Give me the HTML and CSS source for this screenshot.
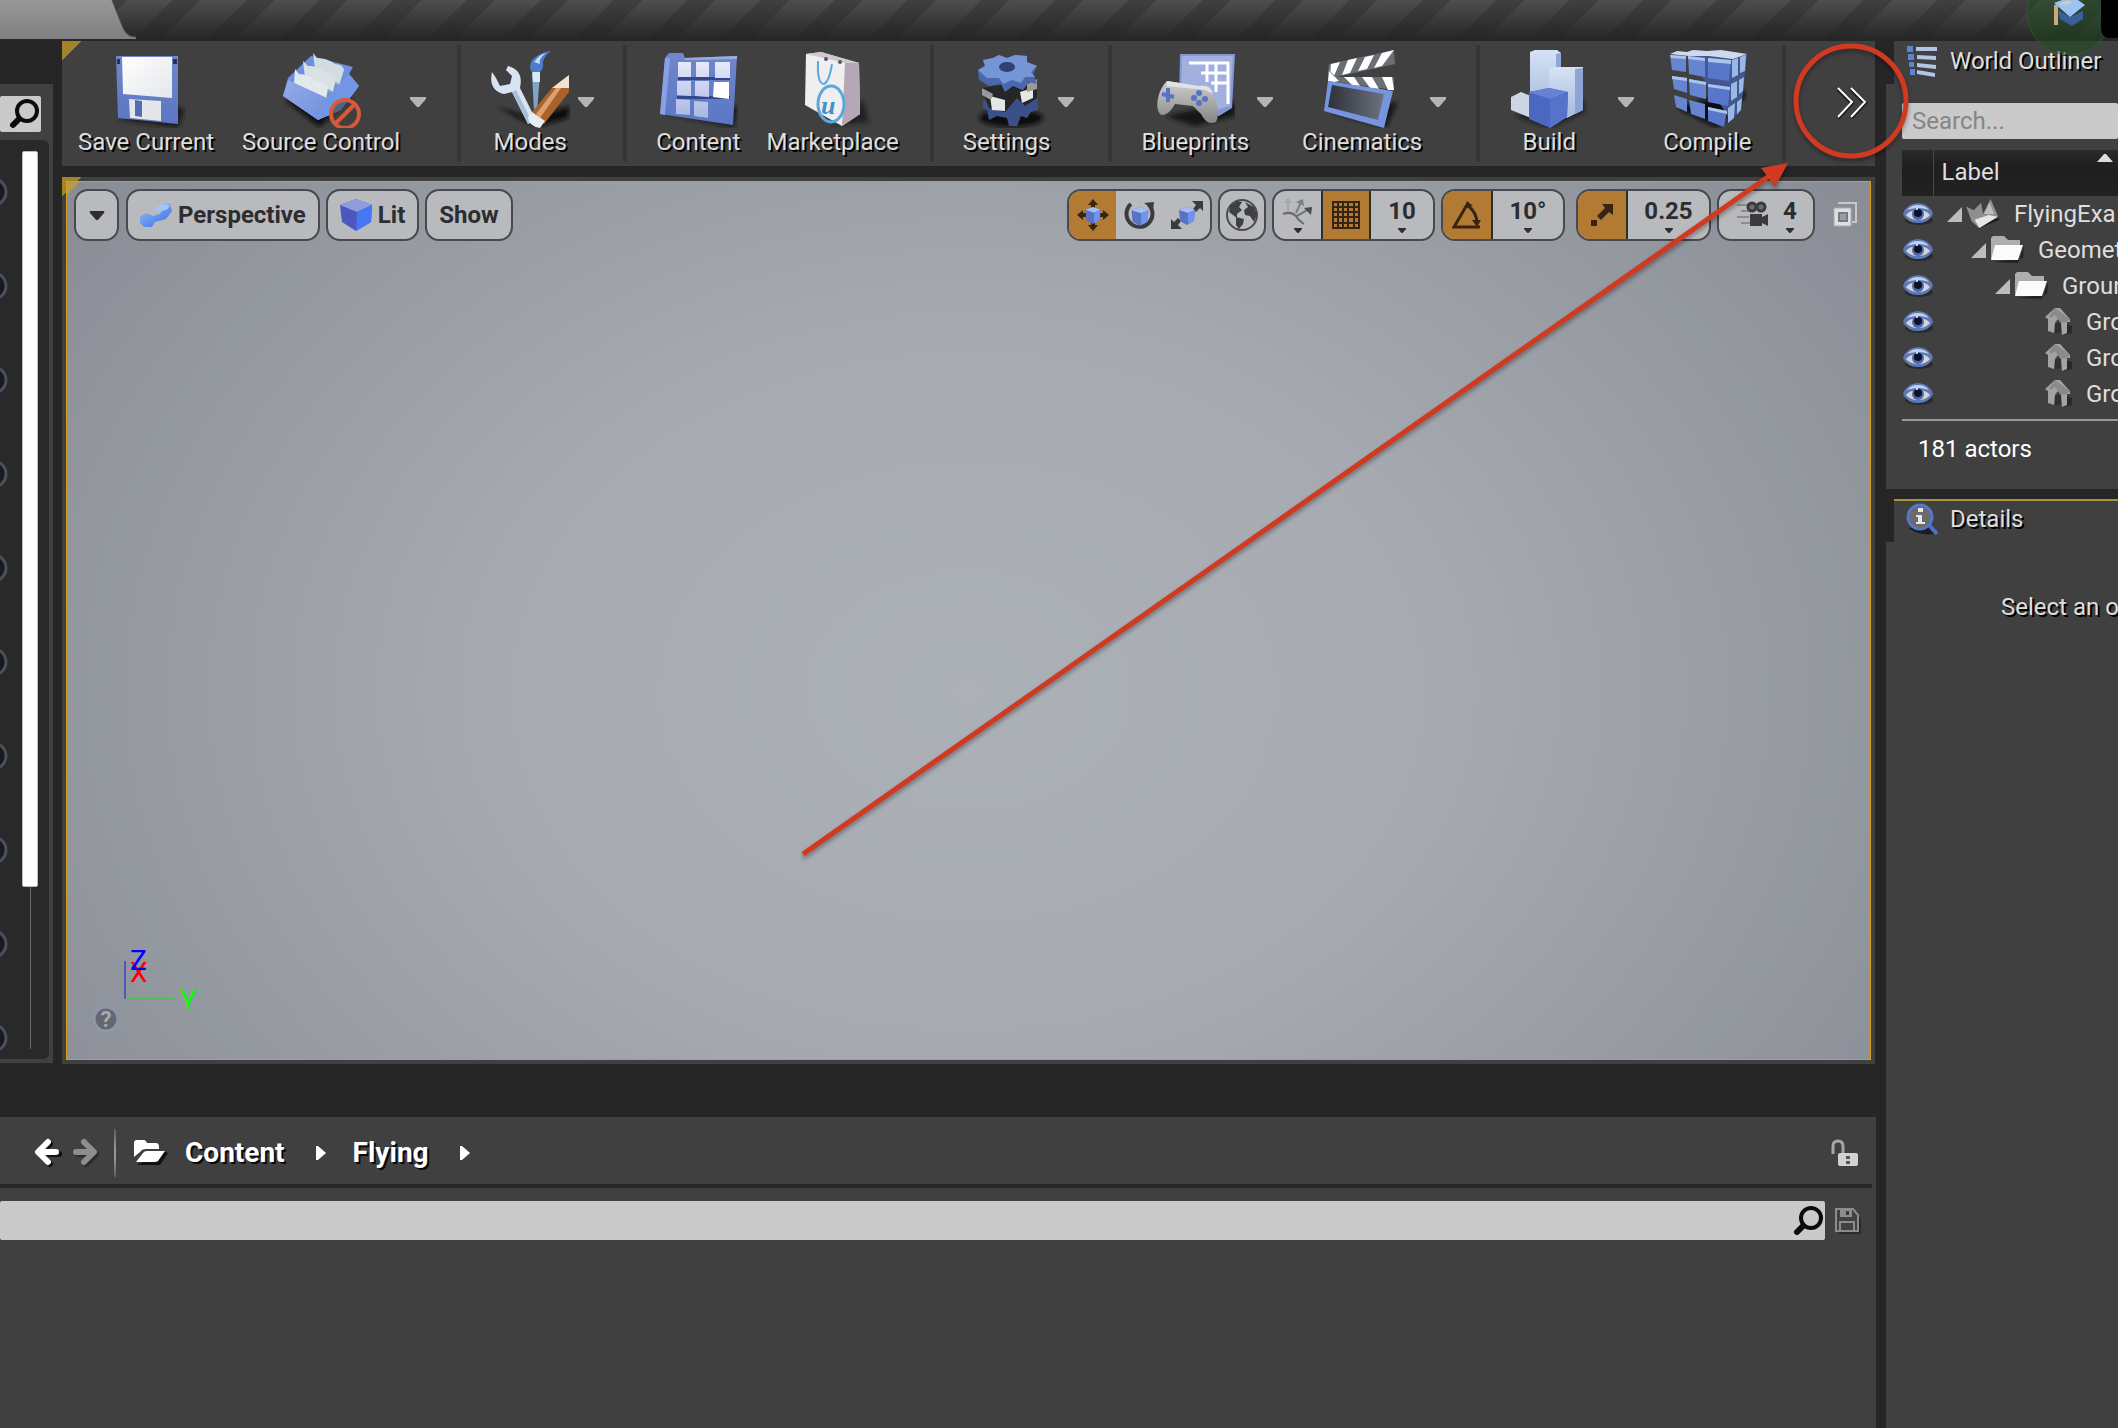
FILE: index.html
```html
<!DOCTYPE html>
<html lang="en">
<head>
<meta charset="utf-8">
<title>FlyingExample - Unreal Editor</title>
<link rel="stylesheet" href="styles.css">
</head>
<body>
<svg class="defs" width="0" height="0" aria-hidden="true">
  <defs>
    <linearGradient id="blue" x1="0" y1="0" x2="0" y2="1"><stop offset="0" stop-color="#6f87cb"/><stop offset="1" stop-color="#5b76c4"/></linearGradient>
    <linearGradient id="sky" x1="0" y1="0" x2="1" y2="1"><stop offset="0" stop-color="#94abe8"/><stop offset="1" stop-color="#6f8fdc"/></linearGradient>
    <linearGradient id="white" x1="0" y1="0" x2="1" y2="1"><stop offset="0" stop-color="#ffffff"/><stop offset="1" stop-color="#e4e6ea"/></linearGradient>
    <linearGradient id="tile" x1="0" y1="0" x2="0" y2="1"><stop offset="0" stop-color="#e6eafa"/><stop offset="1" stop-color="#a9b6e2"/></linearGradient>
    <linearGradient id="pale" x1="0" y1="0" x2="0" y2="1"><stop offset="0" stop-color="#d6e2f5"/><stop offset="1" stop-color="#a5b9dd"/></linearGradient>
    <linearGradient id="grey" x1="0" y1="0" x2="0" y2="1"><stop offset="0" stop-color="#cfcfcf"/><stop offset="1" stop-color="#858585"/></linearGradient>
    <linearGradient id="slate" x1="0" y1="0" x2="1" y2="0"><stop offset="0" stop-color="#2e3138"/><stop offset="1" stop-color="#6c727e"/></linearGradient>
    <linearGradient id="cyan" x1="0" y1="0" x2="1" y2="1"><stop offset="0" stop-color="#8fbcf5"/><stop offset="1" stop-color="#3b6ee6"/></linearGradient>
    <filter id="soft" x="-20%" y="-50%" width="140%" height="200%"><feGaussianBlur stdDeviation="2"/></filter>
    <symbol id="magnifier" viewBox="0 0 32 32"><circle cx="19" cy="13" r="10" fill="none" stroke="#0b0b0b" stroke-width="4"/><path d="M11 21 5 27" stroke="#0b0b0b" stroke-width="6" stroke-linecap="round"/></symbol>
    <symbol id="eye" viewBox="0 0 32 26"><ellipse cx="17" cy="19" rx="14" ry="5" fill="#2a2a2a"/><path d="M1 13Q4 3 16 2Q28 3 31 13Q27 22 16 22Q5 22 1 13z" fill="#5f7abb"/><path d="M5 9Q9 4 16 4Q23 4 27 9Q16 5 5 9z" fill="#c4cee8"/><path d="M4 14Q8 9 16 9Q24 9 28 14Q24 19 16 19Q8 19 4 14z" fill="#d6d3d0"/><circle cx="16" cy="13" r="6" fill="#4a66b4"/><circle cx="16" cy="12" r="4" fill="#0c1224"/><circle cx="15" cy="8" r="1" fill="#fff"/></symbol>
    <symbol id="folder" viewBox="0 0 34 28"><path d="M3 26 28 27 34 10 33 22z" fill="#222"/><path d="M1 24V2L3 0H14L18 4H30V9H7z" fill="#aeaeae"/><path d="M5 9H33L28 24H1z" fill="#fbfbfb"/></symbol>
    <symbol id="house" viewBox="0 0 28 30"><path d="M18 28 27 26 27 19 20 17z" fill="#282828"/><path d="M0 10 10 1 15 1 25 12 25 15 22 15 22 26 17 28 16 16 13 12 10 16 9 26 3 24 3 12z" fill="#a3a3a3"/><path d="M10 1 4 9 6 11 10 8 16 16 22 15 25 12z" fill="#8a8a8a"/><path d="M10 16 16 16 16 25 10 26z" fill="#303030"/></symbol>
    <symbol id="help" viewBox="0 0 30 30"><circle cx="15" cy="15" r="13" fill="#191a1d" stroke="#4a515e" stroke-width="3"/></symbol>
    <symbol id="drop" viewBox="0 0 16 10"><path d="M0 0H16V2L9 10H7L0 2z"/></symbol>
    <symbol id="twist" viewBox="0 0 15 15"><path d="M15 0V15H0z" fill="#bcbcbc"/></symbol>
    <symbol id="box" viewBox="0 0 16 18"><path d="M0 3 8 0 16 3 15 14 8 18 1 14z" fill="#5673c4"/><path d="M0 3 8 0 16 3 9 6z" fill="#a9bdf0"/><path d="M9 6 16 3 15 14 9 17z" fill="#6f93ee"/></symbol>
  </defs>
</svg>

<header class="titlebar">
  <svg class="tab-shape" width="140" height="39" viewBox="0 0 140 39" aria-hidden="true">
    <defs><linearGradient id="tabfill" x1="0" y1="0" x2="0" y2="1"><stop offset="0" stop-color="#989898"/><stop offset="1" stop-color="#7f7f7f"/></linearGradient></defs>
    <path d="M0 0H112L123 28Q127 37 136 37V39H0z" fill="url(#tabfill)"/>
    <path d="M112 0 123 28Q127 37 136 37" fill="none" stroke="#4a4a4a" stroke-width="1"/>
  </svg>
  <svg class="tutorial" width="92" height="56" viewBox="0 0 92 56" aria-hidden="true">
    <circle cx="43" cy="13" r="42" fill="#1f4a1f" fill-opacity=".5" stroke="#2a6a2a" stroke-opacity=".6"/>
    <path d="M32 10 44 17 57 11 57 19 46 26 34 19z" fill="#3d5f98"/><path d="M28 3 36 0H52L59 5 44 17z" fill="#9cc4f2"/><path d="M35 4 45 2" stroke="#e3cf9a" stroke-width="2"/><path d="M30 5V25" stroke="#c8ab7c" stroke-width="4"/>
    <path d="M75 0H92V38H82Q75 36 75 28z" fill="#000"/>
  </svg>
</header>

<div class="workspace">
  <div class="main">
    <div class="upper">
      <aside class="place-panel">
        <div class="field place-search"><input type="text" aria-label="Search classes"><svg width="32" height="32"><use href="#magnifier"/></svg></div>
        <div class="place-list">
          <ul class="helps">
            <li><svg><use href="#help"/></svg></li><li><svg><use href="#help"/></svg></li><li><svg><use href="#help"/></svg></li><li><svg><use href="#help"/></svg></li><li><svg><use href="#help"/></svg></li>
            <li><svg><use href="#help"/></svg></li><li><svg><use href="#help"/></svg></li><li><svg><use href="#help"/></svg></li><li><svg><use href="#help"/></svg></li><li><svg><use href="#help"/></svg></li>
          </ul>
          <div class="track"><div class="thumb"></div></div>
        </div>
      </aside>

      <div class="level">
        <nav class="toolbar corner" aria-label="Level toolbar">
          <div class="group first">
            <button class="tool"><svg viewBox="0 0 80 78">
              <path d="M12 70 72 78 79 60 70 56z" fill="#1c1c1c" filter="url(#soft)"/>
              <path d="M10 6H72V74L12 68z" fill="url(#blue)"/><path d="M16 7H66V48L17 44z" fill="url(#white)"/><path d="M23 49 55 51V71L24 68z" fill="#e4e6ea"/><path d="M29 50 36 51V67L29 66z" fill="#4f6cb4"/><path d="M11 9H14V14H11zM67 9H71V14H67z" fill="#26304f"/>
            </svg><span>Save Current</span></button>
            <button class="tool has-drop"><svg viewBox="0 0 80 78">
              <path d="M4 50 38 77 72 48z" fill="#111" filter="url(#soft)"/>
              <path d="M7 28 30 6 72 17 68 24 78 36 60 60 37 70 2 46z" fill="#6e8fe0"/>
              <path d="M32 3 36 8Q46 8 54 14Q62 14 63 20L58 36 34 20z" fill="#d3dce1"/><path d="M34 22 58 35" stroke="#93a4b4" stroke-width="2"/>
              <path d="M22 11 27 16Q36 15 45 22Q54 23 55 29L52 42 24 28z" fill="#d9e1e5"/><path d="M25 29 50 42" stroke="#8e9fb0" stroke-width="2"/>
              <path d="M14 19 18 24Q28 24 35 31Q45 32 47 38L45 50 13 34z" fill="#e1e9ec"/>
              <path d="M7 30 46 48 37 70 2 46z" fill="url(#sky)"/><path d="M46 48 68 24 78 36 60 60 37 70z" fill="#7396e4"/>
              <circle cx="64" cy="64" r="14" fill="#404040" fill-opacity=".6" stroke="#d55a3c" stroke-width="4"/><path d="M54 74 74 54" stroke="#d55a3c" stroke-width="4"/>
            </svg><span>Source Control</span></button>
            <button class="drop" aria-label="Source Control options"><svg><use href="#drop"/></svg></button>
          </div>
          <div class="group modes">
            <button class="tool has-drop"><svg viewBox="0 0 80 78">
              <path d="M6 56 40 68 80 56 78 68 50 76 36 72z" fill="#0d0d0d" filter="url(#soft)"/>
              <path d="M2 22Q-2 40 14 44L22 42 38 74 46 70 30 38Q34 20 18 16L16 20 22 26 20 34 10 36 6 28z" fill="#d9e4f2"/><path d="M22 42 38 74 42 72 26 40z" fill="#a8bedb"/>
              <path d="M42 24H50L47 62H44z" fill="#7fa3c9"/><path d="M42 20H50V32H43z" fill="#dce8f4"/><path d="M61 1Q50 2 42 10Q38 18 42 22L50 22Q54 18 53 12Q54 6 61 1z" fill="#4f7cc9"/><path d="M44 12Q50 4 56 3Q48 9 50 14z" fill="#c3dcf7"/>
              <path d="M79 25V42L54 74 42 62 62 38z" fill="#a8632a"/><path d="M79 25V38L70 38 62 38z" fill="#f1e3d3"/><path d="M66 38 46 64 50 68 71 38z" fill="#dfa070"/><path d="M42 62 55 71 50 78Q38 76 38 67z" fill="#e5edf5"/>
            </svg><span>Modes</span></button>
            <button class="drop" aria-label="Mode options"><svg><use href="#drop"/></svg></button>
          </div>
          <div class="group">
            <button class="tool"><svg viewBox="0 0 80 78">
              <path d="M8 64 76 78 80 56z" fill="#1a1a1a" filter="url(#soft)"/>
              <path d="M7 8 11 3H25L27 8 79 6 75 75 2 64z" fill="url(#blue)"/><path d="M27 8 79 6V9L27 10z" fill="#9badde"/><path d="M7 8 12 8 7 65 2 64z" fill="#88a0e6"/>
              <path d="M20 27H72V30H20zM19 46H72V49H19z" fill="#33488c"/>
              <path d="M20 12H33V27H20zM38 12H51V27H38zM57 12H72V28H57zM19 31H33V46L19 45zM37 31H51V47L37 46zM18 49 32 50V65L18 64zM36 51 50 52V68L36 66z" fill="url(#tile)"/><path d="M56 32H71V49L55 47z" fill="#fff"/>
            </svg><span>Content</span></button>
            <button class="tool"><svg viewBox="0 0 80 78">
              <path d="M40 76 76 72 70 50z" fill="#222" filter="url(#soft)"/>
              <path d="M13 4 28 2 66 13 67 64 49 76 12 55z" fill="#f1eef2"/><path d="M52 13 66 13 67 64 49 76z" fill="#b5a8b4"/><path d="M13 4 28 2 66 13 52 13z" fill="#cfc9cf"/>
              <path d="M25 11Q24 34 31 34Q36 32 39 14" fill="none" stroke="#5aa9dc" stroke-width="2"/><ellipse cx="38" cy="54" rx="13" ry="18" fill="none" stroke="#5aa9dc" stroke-width="3"/>
              <text x="28" y="64" class="bag-mark">u</text><circle cx="33" cy="9" r="2" fill="#555"/><circle cx="47" cy="12" r="2" fill="#555"/>
            </svg><span>Marketplace</span></button>
          </div>
          <div class="group">
            <button class="tool has-drop"><svg viewBox="0 0 80 78">
              <ellipse cx="44" cy="68" rx="32" ry="9" fill="#111" filter="url(#soft)"/>
              <path d="M16 50 66 44 71 46 71 60 64 62 60 68 54 66 50 76 42 76 40 68 30 66 22 70 20 60 16 58z" fill="#3b5088"/><path d="M14 38 70 30V48L58 56 50 48 38 62 22 58 18 48z" fill="#252628"/>
              <path d="M23 46 38 50V61L25 60zM53 42 66 38V48L55 53z" fill="#e6e6e6"/><path d="M15 38 26 44 24 50 15 45zM60 34 70 29V39L60 42z" fill="#9a9a9a"/>
              <path d="M11 20 18 16 16 10 26 8 32 5 40 8 48 5 60 6 60 12 70 16 66 24 70 34 62 32 56 40 46 36 38 42 34 34 22 36 12 30z" fill="#4a68ac"/>
              <path d="M11 20 18 16 16 10 26 8 32 5 40 8 48 5 60 6 60 12 70 16 64 22 68 27 58 27 54 33 45 30 36 34 32 28 20 28z" fill="#7595d6"/><ellipse cx="40" cy="17" rx="8" ry="5" fill="#2e4271"/>
            </svg><span>Settings</span></button>
            <button class="drop" aria-label="Settings options"><svg><use href="#drop"/></svg></button>
          </div>
          <div class="group pair">
            <button class="tool has-drop"><svg viewBox="0 0 80 78">
              <path d="M10 66 40 76 80 66 80 52z" fill="#151515" filter="url(#soft)"/>
              <path d="M25 4H80L77 58 64 66 24 50z" fill="#8398d3"/><path d="M27 6H78L75 56 60 60 26 48z" fill="#a1b0de"/>
              <path d="M34 13H73V54M52 13V32M61 13V42M46 23H73M56 33H73" fill="none" stroke="#fff" stroke-width="3"/>
              <path d="M12 31 44 36Q56 34 58 44Q66 62 61 72Q52 76 46 64L38 56 20 54Q12 68 5 64Q0 58 4 44Q7 36 12 31z" fill="url(#grey)"/><path d="M12 31 44 36Q56 34 58 44L50 40 12 36z" fill="#e2e2e2"/>
              <path d="M13 38V52M7 44 19 47" stroke="#5673c4" stroke-width="4"/><g fill="#5673c4"><circle cx="44" cy="43" r="3"/><circle cx="44" cy="53" r="3"/><circle cx="39" cy="48" r="3"/><circle cx="50" cy="49" r="3"/></g>
            </svg><span>Blueprints</span></button>
            <button class="drop" aria-label="Blueprint options"><svg><use href="#drop"/></svg></button>
            <button class="tool has-drop"><svg viewBox="0 0 80 78">
              <path d="M8 62 64 78 76 52z" fill="#151515" filter="url(#soft)"/>
              <path d="M7 14 72 0 73 14 14 27 10 31 6 23z" fill="#6a6f75"/><path d="M9 14 18 12 12 26 8 24zM26 10 35 8 28 23 20 25zM43 7 52 5 45 19 36 21zM60 3 72 0 60 16 52 18z" fill="#fff"/>
              <path d="M7 20 14 27 72 27V40L6 31z" fill="#6a6f75"/><path d="M7 21 17 31 12 32 6 31zM22 27 32 27 38 36 30 35zM40 27 50 27 57 39 48 38zM60 27H70L72 40 66 40z" fill="#fff"/>
              <path d="M6 31 71 41 62 78 2 61z" fill="#7595e0"/><path d="M10 35 62 44 56 70 6 57z" fill="url(#slate)"/>
            </svg><span>Cinematics</span></button>
            <button class="drop" aria-label="Cinematics options"><svg><use href="#drop"/></svg></button>
          </div>
          <div class="group">
            <button class="tool wide has-drop"><svg viewBox="0 0 80 78">
              <path d="M6 66 40 78 76 62 74 50z" fill="#1a1a1a" filter="url(#soft)"/>
              <path d="M21 2 26 0H48L52 3V60H21z" fill="url(#pale)"/><path d="M47 4 52 3V46H47z" fill="#8ea6d2"/><path d="M40 19 46 17H74V60L58 68 40 60z" fill="url(#pale)"/><path d="M66 19 74 18V60L66 64z" fill="#8da5d5"/><path d="M2 47 12 42 22 46V68L2 60z" fill="#cfd6e3"/>
              <path d="M20 42 40 38 59 42 58 67 41 78 20 69z" fill="#4a68c2"/><path d="M20 42 40 38 59 42 41 49z" fill="#6583d0"/><path d="M41 49 59 42 58 67 41 78z" fill="#5573cb"/>
            </svg><span>Build</span></button>
            <button class="drop" aria-label="Build options"><svg><use href="#drop"/></svg></button>
            <button class="tool"><svg viewBox="0 0 80 78">
              <path d="M10 58 50 78 80 44 74 40z" fill="#111" filter="url(#soft)"/>
              <path d="M18 3 26 0 80 4 78 22 76 44 72 64 62 68 44 40z" fill="#44588e"/><path d="M3 4 10 1 20 2 26 0 40 1 54 0 80 4 66 9 42 6 22 6z" fill="#cfdaf0"/>
              <path d="M65 10 71 8V25L65 28zM73 7 79 5 78 21 73 23zM64 34 70 31 70 47 64 51zM72 30 77 27 76 41 72 44zM61 58 68 53 67 68 61 73zM70 52 75 48 74 60 70 64z" fill="#98b9e8"/>
              <path d="M3 5 19 6V22L5 20zM21 6 38 8V27L22 24zM5 26 20 28V43L7 39zM22 29 39 32V49L23 45zM7 45 20 49V62L9 57zM22 50 38 54V69L24 64z" fill="#6684d0"/><path d="M41 8 64 10 62 31 41 28zM41 34 63 37 61 56 41 52zM41 57 60 61 57 77 41 71z" fill="#5777cb"/>
              <path d="M3 5 19 6V9L4 8zM21 6 38 8V11L21 9zM41 8 64 10V14L41 12zM5 26 20 28V31L5 29zM22 29 39 32V35L22 32zM41 34 63 37V40L41 37zM41 57 60 61V64L41 60z" fill="#a9c5ee"/>
            </svg><span>Compile</span></button>
          </div>
          <div class="group more">
            <button class="overflow" aria-label="More tools"><svg width="34" height="34" viewBox="0 0 34 34"><path d="M3 3 17 17 3 32M16 3 30 17 16 32" fill="none" stroke="#1c1c1c" stroke-width="4"/><path d="M3 2 17 16 3 31M16 2 30 16 16 31" fill="none" stroke="#fff" stroke-width="2"/></svg></button>
          </div>
        </nav>

        <section class="viewport-panel corner" aria-label="Viewport">
          <div class="viewport">
            <div class="view-tools">
              <button class="pill menu" aria-label="Viewport options"><svg width="16" height="9" class="ink"><use href="#drop"/></svg></button>
              <button class="pill"><svg width="32" height="32" viewBox="0 0 32 32"><path d="M0 18 6 14 13 17 20 15 22 11 16 9 22 5 30 5 32 12 26 20 15 23 12 28 4 28 0 24z" fill="url(#cyan)"/><path d="M13 10 22 5 30 6 28 10 20 13z" fill="#9fc6f5"/></svg>Perspective</button>
              <button class="pill"><svg width="32" height="32" viewBox="0 0 32 32"><path d="M0 6 16 0 32 6 31 23 16 32 2 23z" fill="#4c57bd"/><path d="M0 6 16 0 32 6 17 13z" fill="#8e9ddd"/><path d="M17 13 32 6 31 23 16 32z" fill="#4576f3"/></svg>Lit</button>
              <button class="pill">Show</button>
              <span class="spacer"></span>
              <div class="segment">
                <button class="cell on" aria-label="Translate"><svg width="32" height="32" viewBox="0 0 32 32"><path d="M16 0 21 6H18V26H21L16 32 11 26H14V6H11zM0 16 6 11V14H26V11L32 16 26 21V18H6V21z" fill="#352512"/><use href="#box" x="8" y="8" width="16" height="17"/></svg></button>
                <button class="cell" aria-label="Rotate"><svg width="32" height="32" viewBox="0 0 32 32"><path d="M7 5A13 13 0 1 0 25 6" fill="none" stroke="#3a3b3d" stroke-width="4"/><path d="M20 4 30 3 29 11z" fill="#3a3b3d"/><use href="#box" x="7" y="8" width="18" height="19"/></svg></button>
                <button class="cell" aria-label="Scale"><svg width="34" height="32" viewBox="0 0 34 32"><path d="M22 2H33V12L30 9 26 13 23 10 26 6zM1 20 4 23 8 19 11 22 8 26 12 30H1z" fill="#3a3b3d"/><use href="#box" x="8" y="8" width="18" height="18"/></svg></button>
              </div>
              <button class="pill cell" aria-label="World space"><svg width="34" height="34" viewBox="0 0 34 34"><circle cx="17" cy="17" r="15" fill="#b9babd" stroke="#4a4b4d" stroke-width="2"/><path d="M5 8 12 3 17 4 14 9 17 12 12 16 12 20 8 17 4 14zM11 19 19 21 18 26 14 31 11 27zM20 4 29 9 32 16 29 24 25 18 20 17 19 12 23 9z" fill="#3f4042"/></svg></button>
              <div class="segment">
                <button class="cell col" aria-label="Surface snapping"><svg width="32" height="28" viewBox="0 0 32 28"><path d="M1 17Q9 14 14 19Q16 23 22 27M15 19 27 12" fill="none" stroke="#6b6c6f" stroke-width="2"/><path d="M22 11 30 10 29 18z" fill="#4a4b4e"/><path d="M6 15V3" fill="none" stroke="#a5a6aa" stroke-width="2"/><path d="M2 6 6 1 10 6z" fill="#a5a6aa"/><path d="M14 16 19 5" fill="none" stroke="#7d7e82" stroke-width="2"/><path d="M14 5 21 2 22 9z" fill="#7d7e82"/></svg><svg width="8" height="5" class="ink"><use href="#drop"/></svg></button>
                <button class="cell grid on" aria-label="Grid snapping"><svg width="28" height="28" viewBox="0 0 28 28"><path d="M1 1H27V27H1zM6 1V27M11 1V27M16 1V27M22 1V27M1 6H27M1 11H27M1 16H27M1 22H27" fill="none" stroke="#352512" stroke-width="2"/></svg></button>
                <button class="cell col n1"><span>10</span><svg width="8" height="5" class="ink"><use href="#drop"/></svg></button>
              </div>
              <div class="segment angle">
                <button class="cell grid on" aria-label="Rotation snapping"><svg width="30" height="30" viewBox="0 0 30 30"><path d="M16 3 2 27H28M16 6Q25 12 25 24" fill="none" stroke="#352512" stroke-width="3"/><path d="M13 8 15 1 21 6zM20 20 29 20 25 27z" fill="#352512"/></svg></button>
                <button class="cell col n2"><span>10°</span><svg width="8" height="5" class="ink"><use href="#drop"/></svg></button>
              </div>
              <div class="segment">
                <button class="cell grid on" aria-label="Scale snapping"><svg width="26" height="26" viewBox="0 0 26 26"><path d="M2 18H8V24H2zM13 2H24V13L20 10 12 18 8 14 16 6z" fill="#352512"/></svg></button>
                <button class="cell col n3"><span>0.25</span><svg width="8" height="5" class="ink"><use href="#drop"/></svg></button>
              </div>
              <button class="pill camera"><svg width="34" height="28" viewBox="0 0 34 28"><path d="M2 4H14M6 10H16M2 16H14M6 22H16" stroke="#8b8c90" stroke-width="2"/><path d="M15 13H27V16L33 13V25L27 22V25H15z" fill="#3a3b3d"/><g fill="#6d6e71" stroke="#3a3b3d" stroke-width="3"><circle cx="17" cy="6" r="4"/><circle cx="26" cy="6" r="4"/></g></svg><span class="col"><span>4</span><svg width="8" height="5" class="ink"><use href="#drop"/></svg></span></button>
              <button class="maximize" aria-label="Restore viewport"><svg width="26" height="26" viewBox="0 0 26 26"><path d="M6 1H24V20H20" fill="none" stroke="#c7c8cb" stroke-width="2"/><path d="M2 6H19V24H2z" fill="#dedfe1" stroke="#a9abb0" stroke-width="1"/><path d="M7 11H15V19H7z" fill="#9a9da6" stroke="#777a83" stroke-width="2"/></svg></button>
            </div>
            <svg class="axis" width="120" height="100" viewBox="0 0 120 100" role="img" aria-label="Axis gizmo">
              <path d="M38 58V20" stroke="#1414e6" fill="none"/><path d="M38 58H89" stroke="#14e614" fill="none"/>
              <text x="43" y="41" fill="#f00">X</text><text x="43" y="29" fill="#00f">Z</text><text x="93" y="69" fill="#0f0">Y</text>
              <circle cx="19" cy="78" r="12" fill="#64676f" stroke="#8d97ab" stroke-width="3"/><text x="19" y="86" class="q">?</text>
            </svg>
          </div>
        </section>
      </div>
    </div>

    <section class="browser" aria-label="Content browser">
      <div class="crumbs">
        <button class="bare" aria-label="Back"><svg width="28" height="30" viewBox="0 0 28 30"><g fill="none" stroke-width="6" stroke-linecap="round" stroke-linejoin="round"><path d="M16 6 6 16 16 26M7 16H25" stroke="#111"/><path d="M14 4 4 14 14 24M5 14H22" stroke="#fff"/></g></svg></button>
        <button class="bare" aria-label="Forward"><svg width="28" height="30" viewBox="0 0 28 30"><g fill="none" stroke-width="6" stroke-linecap="round" stroke-linejoin="round"><path d="M14 6 24 16 14 26M6 16H22" stroke="#2b2b2b"/><path d="M12 4 22 14 12 24M4 14H20" stroke="#8e8e8e"/></g></svg></button>
        <span class="rule"></span>
        <button class="bare paths" aria-label="Choose a path"><svg width="34" height="28" viewBox="0 0 34 28"><path d="M3 26 26 26 34 14 30 12z" fill="#111"/><path d="M0 18V4Q0 1 3 1H10Q12 1 13 4H22Q25 4 25 8V10H12Q8 10 6 13z" fill="#fff"/><path d="M2 23 9 14Q10 12 13 12H31L24 22Q23 23 20 23z" fill="#fff"/></svg></button>
        <a href="#content">Content</a><svg class="arrow" width="12" height="18" viewBox="0 0 12 18"><path d="M1 2H3L11 9 3 16H1z"/></svg>
        <a href="#flying">Flying</a><svg class="arrow" width="12" height="18" viewBox="0 0 12 18"><path d="M1 2H3L11 9 3 16H1z"/></svg>
        <button class="bare lock" aria-label="Lock"><svg width="28" height="28" viewBox="0 0 28 28"><path d="M2 15V7Q2 2 7 2Q12 2 12 7V15" fill="none" stroke="#a6a6a6" stroke-width="3"/><rect x="7" y="14" width="20" height="13" rx="2" fill="#d2d2d2"/><path d="M15 17H19V20H15zM15 22H19V25H15z" fill="#555"/></svg></button>
      </div>
      <div class="filter">
        <div class="field wide-search"><input type="text" aria-label="Search Flying"><svg width="32" height="32"><use href="#magnifier"/></svg></div>
        <button class="bare" aria-label="Save search"><svg width="26" height="26" viewBox="0 0 26 26"><path d="M4 24H24V8L26 10V26H4z" fill="#2b2b2b"/><path d="M1 1H18L23 7V23H1z" fill="none" stroke="#8c8c8c" stroke-width="2"/><path d="M5 1H17V9H5z" fill="#8c8c8c"/><path d="M11 3H14V7H11z" fill="#3a3a3a"/><path d="M5 22V14H19V22" fill="none" stroke="#8c8c8c" stroke-width="2"/></svg></button>
      </div>
    </section>
  </div>

  <aside class="side">
    <section class="outliner">
      <h2 class="tab"><svg width="32" height="32" viewBox="0 0 32 32"><path d="M1 1H7V7H1zM2 9H8V15H2zM3 17H8V22H3zM4 24H9V30H4z" fill="#5b84d4"/><path d="M10 2H31V6H10zM11 10 30 11V15L11 14zM11 18 30 20V24L11 22zM11 25 29 28V32L11 29z" fill="#b4c4e6"/></svg>World Outliner</h2>
      <div class="outliner-body">
        <div class="field side-search"><input type="text" placeholder="Search..." aria-label="Search actors"></div>
        <div class="tree">
          <table>
            <thead><tr><th class="vis" aria-label="Visibility"></th><th>Label<svg class="sort" width="16" height="8" viewBox="0 0 16 8"><path d="M0 8 7 0H9L16 8z" fill="#ddd"/></svg></th></tr></thead>
            <tbody>
              <tr><td class="vis"><svg><use href="#eye"/></svg></td><td><div class="node d0"><svg class="twist"><use href="#twist"/></svg><svg class="kind" viewBox="0 0 36 32"><path d="M12 32 36 22 30 18z" fill="#1f1f1f"/><path d="M0 8 8 12 16 4 18 16 26 0 34 18 14 31 6 24z" fill="#8f8f8f"/><path d="M9 22 24 17 34 19 14 31z" fill="#e6e6e6"/><path d="M19 16 25 4 30 16z" fill="#bdbdbd"/></svg>FlyingExa</div></td></tr>
              <tr><td class="vis"><svg><use href="#eye"/></svg></td><td><div class="node d1"><svg class="twist"><use href="#twist"/></svg><svg class="kind"><use href="#folder"/></svg>Geomet</div></td></tr>
              <tr><td class="vis"><svg><use href="#eye"/></svg></td><td><div class="node d2"><svg class="twist"><use href="#twist"/></svg><svg class="kind"><use href="#folder"/></svg>Groun</div></td></tr>
              <tr><td class="vis"><svg><use href="#eye"/></svg></td><td><div class="node d3"><svg class="kind"><use href="#house"/></svg>Gro</div></td></tr>
              <tr><td class="vis"><svg><use href="#eye"/></svg></td><td><div class="node d3"><svg class="kind"><use href="#house"/></svg>Gro</div></td></tr>
              <tr><td class="vis"><svg><use href="#eye"/></svg></td><td><div class="node d3"><svg class="kind"><use href="#house"/></svg>Gro</div></td></tr>
            </tbody>
          </table>
        </div>
        <p class="count">181 actors</p>
      </div>
    </section>
    <section class="details">
      <h2 class="tab active"><svg width="32" height="34" viewBox="0 0 32 34"><path d="M2 26Q14 34 28 32L22 24z" fill="#1d1d1d"/><path d="M22 22 31 32" stroke="#4c70c4" stroke-width="4"/><circle cx="14" cy="15" r="12" fill="#6a6a6a" stroke="#5476c6" stroke-width="3"/><path d="M12 6H17V10H12zM10 13H16V20H19V22H10V20H12V15H10z" fill="#e6e6e6"/></svg>Details</h2>
      <div class="details-body"><p>Select an o</p></div>
    </section>
  </aside>
</div>

<svg class="callout" width="1120" height="820" viewBox="0 0 1120 820" aria-hidden="true">
  <g transform="translate(-800 -40)">
    <circle cx="1851" cy="101" r="55" fill="none" stroke="#d13a20" stroke-width="5"/>
    <path d="M803 854 1772 174" stroke="#d13a20" stroke-width="5" fill="none"/>
    <path d="M1788 163 1761 168 1775 187z" fill="#d13a20"/>
  </g>
</svg>
</body>
</html>
```

FILE: styles.css
```css
:root {
  --gap: #262626;
  --panel: #404040;
  --gold: #d99c18;
  --ink: #2c2d2f;
  --field: #cacaca;
}

* { box-sizing: border-box; }

body {
  position: relative;
  margin: 0;
  min-height: 100vh;
  display: flex;
  flex-direction: column;
  overflow: hidden;
  background: var(--gap);
  color: #dedede;
  font: 24px/28px Roboto, "Liberation Sans", sans-serif;
}

svg { display: block; flex: none; }
.defs { position: absolute; }

button {
  display: flex;
  align-items: center;
  justify-content: center;
  margin: 0;
  padding: 0;
  border: 0;
  background: none;
  color: inherit;
  font: inherit;
}

h2, p, ul { margin: 0; padding: 0; }
ul { list-style: none; }

/* Title bar */
.titlebar {
  display: flex;
  justify-content: space-between;
  height: 39px;
  margin-bottom: 2px;
  background:
    linear-gradient(rgba(34, 34, 34, 0), rgba(34, 34, 34, .9)),
    repeating-linear-gradient(135deg, #4e4e4e 0 18px, #404040 18px 38px, #4e4e4e 38px 52px);
}
.tutorial { position: relative; z-index: 2; }

/* Work area */
.workspace { flex: 1; display: flex; gap: 10px; }
.main { flex: 1; min-width: 0; display: flex; flex-direction: column; gap: 53px; }
.upper { flex: 1; display: flex; gap: 9px; margin-right: 1px; }
.level { flex: 1; min-width: 0; display: flex; flex-direction: column; gap: 11px; }

.field { display: flex; align-items: center; background: var(--field); border-radius: 2px; }
.field input {
  flex: 1;
  min-width: 0;
  width: 0;
  height: 100%;
  padding: 0 10px;
  border: 0;
  background: none;
  font: inherit;
  color: #222;
}
.field input::placeholder { color: #858585; opacity: 1; }

/* Left strip */
.place-panel {
  width: 53px;
  margin: 43px 0 1px;
  padding: 12px 4px 4px 0;
  background: var(--panel);
  display: flex;
  flex-direction: column;
  gap: 8px;
}
.place-search { height: 36px; margin-right: 8px; padding-right: 1px; }
.place-search input { padding: 0; }
.place-list {
  flex: 1;
  display: flex;
  justify-content: space-between;
  padding: 11px 11px 10px 0;
  background: #292929;
  border-radius: 0 6px 6px 0;
}
.helps { width: 8px; overflow: hidden; padding-top: 26px; margin-bottom: -8px; display: flex; flex-direction: column; gap: 64px; }
.helps li { height: 30px; display: flex; justify-content: flex-end; }
.helps svg { width: 30px; height: 30px; }
.track { width: 16px; background: linear-gradient(#6a6a6a, #6a6a6a) 8px 0 / 1px 100% no-repeat; }
.thumb { height: 82%; background: #fff; border: 1px solid #bbb; border-radius: 2px; }

/* Main toolbar */
.corner {
  background: linear-gradient(135deg, #a08427 14px, transparent 14px), var(--panel);
}
.toolbar { display: flex; height: 125px; padding: 4px 0; }
.group { display: flex; padding: 5px 18px 0 16px; border-left: 4px solid #353535; }
.group.first { gap: 2px; padding-left: 3px; padding-right: 15px; border-left: 0; }
.group.modes { padding-right: 13px; }
.group.pair { padding-right: 14px; }
.tool { flex-direction: column; justify-content: flex-start; padding: 0 13px; white-space: nowrap; text-shadow: 2px 2px 0 #000; }
.tool svg { width: 80px; height: 78px; }
.tool.has-drop { padding-right: 2px; }
.tool.wide { margin-right: 21px; }
.drop { width: 38px; height: 104px; justify-content: flex-start; padding-left: 6px; }
.drop svg { width: 16px; height: 10px; fill: #b4b4b4; }
.more { flex: 1; justify-content: flex-end; padding-right: 6px; padding-left: 0; }
.overflow { height: 106px; }
.bag-mark { font: italic bold 26px/26px "Liberation Serif", serif; fill: #3d93cc; text-shadow: none; }

/* Viewport */
.viewport-panel { flex: 1; display: flex; padding: 4px; }
.viewport {
  flex: 1;
  display: flex;
  flex-direction: column;
  justify-content: space-between;
  padding: 7px 12px 18px 7px;
  border: 1px solid var(--gold);
  background:
    linear-gradient(135deg, rgba(200, 160, 50, .7) 9px, transparent 9px),
    radial-gradient(ellipse 62% 95% at 50% 58%, #acb0b7 0%, #a7aab1 42%, #94989f 78%, #838690 112%);
}
.view-tools { display: flex; align-items: center; gap: 6px; color: var(--ink); font-weight: 700; }
.spacer { flex: 1; }
.ink { fill: var(--ink); }
.pill, .segment {
  height: 52px;
  border: 2px solid #47494d;
  border-radius: 14px;
  background: #b9babe;
}
.pill { gap: 6px; padding: 0 12px; }
.pill.menu { width: 45px; padding: 0; margin-right: 1px; }
.pill.cell { padding: 0; }
.segment { display: flex; overflow: hidden; }
.cell { width: 48px; }
.segment .cell { height: 100%; width: 47px; }
.col { display: flex; flex-direction: column; justify-content: center; align-items: center; line-height: 28px; }
.col .ink { margin-top: 3px; }
.cell.on { background: #b27a33; }
.segment .grid { width: 50px; border-right: 2px solid var(--ink); }
.segment .grid:not(:first-child) { border-left: 2px solid var(--ink); }
.segment .n1 { width: 62px; }
.segment .n2 { width: 70px; }
.segment .n3 { width: 81px; }
.angle { margin-right: 5px; }
.camera { width: 98px; gap: 14px; }
.maximize { margin-left: 11px; }
.axis { margin-left: 13px; font-size: 28px; }
.axis .q { font-size: 22px; font-weight: 700; fill: #a4a9b4; text-anchor: middle; }

/* Content browser */
.browser { flex: none; height: 311px; background: var(--panel); }
.crumbs {
  display: flex;
  align-items: center;
  height: 71px;
  margin-right: 4px;
  padding: 4px 13px 0 34px;
  border-bottom: 4px solid #282828;
  gap: 10px;
  color: #fff;
  font-size: 28px;
  font-weight: 700;
  text-shadow: 2px 2px 0 #0a0a0a;
}
.crumbs a { color: inherit; text-decoration: none; }
.rule { width: 2px; height: 48px; margin: 0 8px 0 4px; background: linear-gradient(#5c5c5c, #989898 40%, #989898 60%, #5c5c5c); }
.paths { margin-right: 7px; }
.arrow { margin: 0 16px 0 20px; fill: #fff; }
.lock { margin-left: auto; }
.filter { display: flex; align-items: center; gap: 10px; padding: 13px 15px 0 0; }
.wide-search { flex: 1; height: 39px; padding-right: 1px; }

/* Right column */
.side { width: 232px; display: flex; flex-direction: column; gap: 10px; overflow: hidden; white-space: nowrap; }
.tab {
  display: flex;
  align-items: center;
  gap: 12px;
  height: 43px;
  margin-left: 8px;
  padding: 0 0 4px 12px;
  background: var(--panel);
  font: inherit;
  text-shadow: 2px 2px 0 #000;
}
.tab.active { padding-bottom: 6px; border-top: 2px solid #ab9434; }
.outliner-body { height: 405px; padding: 19px 0 0 16px; background: var(--panel); }
.side-search { height: 36px; margin-bottom: 11px; }
.tree { height: 271px; overflow: hidden; border-bottom: 2px solid #989898; }
table { width: 100%; table-layout: fixed; border-collapse: collapse; }
th { height: 46px; padding: 0 0 2px 8px; background: linear-gradient(#2a2a2a, #1e1e1e 40%, #212121); font-weight: 400; text-align: left; position: relative; }
th.vis { width: 31px; border-right: 1px solid #484848; }
.sort { position: absolute; top: 4px; right: 5px; }
td { height: 36px; padding: 0; overflow: hidden; }
td.vis svg { width: 32px; height: 26px; }
.node { display: flex; align-items: center; }
.twist { width: 15px; height: 15px; margin-right: 4px; }
.kind { width: 34px; height: 30px; margin-right: 14px; }
.d0 { padding-left: 14px; }
.d1 { padding-left: 38px; }
.d2 { padding-left: 62px; }
.d3 { padding-left: 109px; }
.d3 .kind { margin-right: 10px; }
.count { padding: 14px 0 0 16px; color: #fff; }
.details { flex: 1; display: flex; flex-direction: column; }
.details-body { flex: 1; padding: 51px 0 0 115px; background: var(--panel); text-shadow: 2px 2px 0 #000; }

/* Callout drawn over the editor */
.callout { position: absolute; top: 40px; right: 198px; z-index: 3; pointer-events: none; filter: drop-shadow(0 3px 2px rgba(0, 0, 0, .35)); }
```
